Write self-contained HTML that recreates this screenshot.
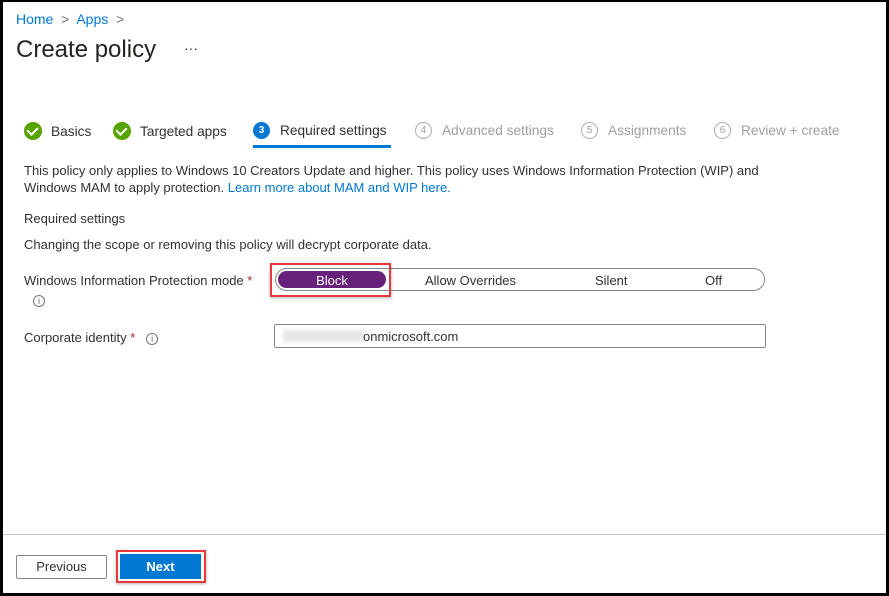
<!DOCTYPE html>
<html><head><style>
*{box-sizing:border-box;margin:0;padding:0}
body{width:889px;height:596px;background:#000;font-family:"Liberation Sans",sans-serif;color:#323130;overflow:hidden}
.page{position:absolute;left:3px;top:2px;width:883px;height:591px;background:#fff}
.a{position:absolute;white-space:nowrap}
.blue{color:#0078d4}
.step{position:absolute;top:120px;font-size:13.7px;display:flex;align-items:center}
.ck{width:18px;height:18px;border-radius:50%;background:#57a300;display:inline-block;margin-right:9px;position:relative}
.ck:after{content:"";position:absolute;left:5px;top:3px;width:5px;height:8px;border:solid #fff;border-width:0 2.5px 2.5px 0;transform:rotate(45deg)}
.num{width:17px;height:17px;border-radius:50%;border:1px solid #b0b0b0;color:#a0a0a0;font-size:10px;display:inline-flex;align-items:center;justify-content:center;margin-right:10px}
.gray{color:#a19f9d}
.t{font-size:13px}
.info{display:inline-block;width:12px;height:12px;border:1px solid #777;border-radius:50%;font-size:9px;text-align:center;line-height:10px;color:#666}
.star{color:#a4262c}
</style></head><body><div class="page">
<div class="a blue" style="left:13px;top:9px;font-size:14px">Home <span style="color:#777">&nbsp;&gt;&nbsp;</span> Apps <span style="color:#777">&nbsp;&gt;</span></div>
<div class="a" style="left:13px;top:34px;font-size:24px;color:#252423">Create policy</div>
<div class="a" style="left:181px;top:38px;font-size:14px">···</div>

<div class="step" style="left:21px"><span class="ck"></span>Basics</div>
<div class="step" style="left:110px"><span class="ck"></span>Targeted apps</div>
<div class="step" style="left:250px"><span class="num" style="background:#0078d4;border-color:#0078d4;color:#fff;font-weight:bold">3</span>Required settings</div>
<div class="a" style="left:250px;top:143px;width:138px;height:3px;background:#0078d4"></div>
<div class="step gray" style="left:412px"><span class="num">4</span>Advanced settings</div>
<div class="step gray" style="left:578px"><span class="num">5</span>Assignments</div>
<div class="step gray" style="left:711px"><span class="num">6</span>Review + create</div>

<div class="a t" style="left:21px;top:160px;line-height:17px">This policy only applies to Windows 10 Creators Update and higher. This policy uses Windows Information Protection (WIP) and<br>Windows MAM to apply protection. <span class="blue">Learn more about MAM and WIP here.</span></div>
<div class="a t" style="left:21px;top:209px">Required settings</div>
<div class="a t" style="left:21px;top:235px">Changing the scope or removing this policy will decrypt corporate data.</div>
<div class="a t" style="left:21px;top:271px">Windows Information Protection mode <span class="star">*</span></div>
<div class="a" style="left:30px;top:289px"><span class="info">i</span></div>

<div class="a" style="left:272px;top:266px;width:490px;height:23px;border:1px solid #8a8886;border-radius:12px"></div>
<div class="a" style="left:275px;top:269px;width:108px;height:17px;background:#68217a;border-radius:9px;color:#fff;font-size:13px;text-align:center;line-height:19px">Block</div>
<div class="a" style="left:267px;top:261px;width:121px;height:34px;border:2px solid #e8373d;box-shadow:0 1px 3px rgba(0,0,0,.3)"></div>
<div class="a t" style="left:422px;top:271px">Allow Overrides</div>
<div class="a t" style="left:592px;top:271px">Silent</div>
<div class="a t" style="left:702px;top:271px">Off</div>

<div class="a t" style="left:21px;top:328px">Corporate identity <span class="star">*</span> &nbsp;&nbsp;<span class="info">i</span></div>
<div class="a" style="left:271px;top:322px;width:492px;height:24px;border:1px solid #8a8886;border-radius:2px"></div>
<div class="a" style="left:280px;top:328px;width:80px;height:12px;background:#e6e6e6;filter:blur(2px)"></div>
<div class="a t" style="left:360px;top:327px">onmicrosoft.com</div>

<div class="a" style="left:0;top:532px;width:883px;height:1px;background:#c8c6c4"></div>
<div class="a" style="left:13px;top:553px;width:91px;height:24px;border:1px solid #8a8886;border-radius:2px;font-size:13px;text-align:center;line-height:22px">Previous</div>
<div class="a" style="left:113px;top:548px;width:90px;height:33px;border:2px solid #e8373d;box-shadow:0 1px 3px rgba(0,0,0,.3)"></div>
<div class="a" style="left:117px;top:552px;width:81px;height:25px;background:#0078d4;color:#fff;font-weight:bold;font-size:13px;text-align:center;line-height:25px">Next</div>
</div></body></html>
